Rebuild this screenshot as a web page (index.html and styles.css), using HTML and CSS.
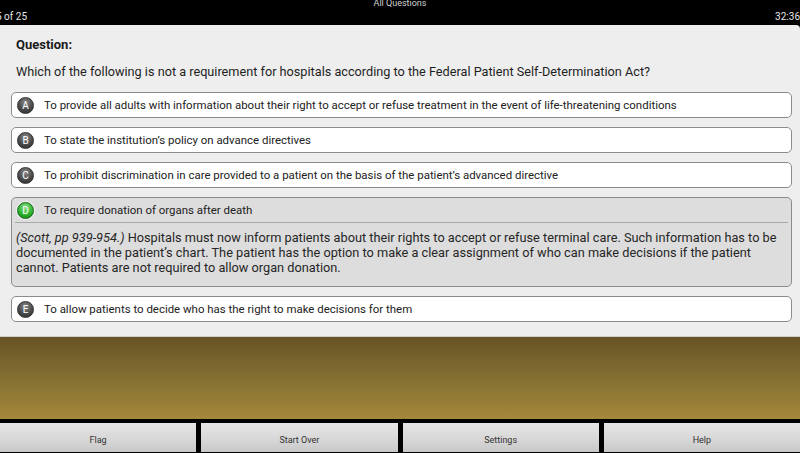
FILE: index.html
```html
<!DOCTYPE html>
<html lang="en">
<head>
    <meta charset="UTF-8">
    <meta name="viewport" content="width=device-width, initial-scale=1.0">
    <title>All Questions</title>
    <link rel="stylesheet" href="styles.css">
</head>
<body>
    <div class="screen">
        <div class="topbar">
            <div class="title">All Questions</div>
            <div class="status-row">
                <span class="counter">5 of 25</span>
                <span class="timer">32:36</span>
            </div>
        </div>

        <div class="panel">
            <div class="q-label">Question:</div>
            <div class="q-text">Which of the following is not a requirement for hospitals according to the Federal Patient Self-Determination Act?</div>

            <div class="answers">
                <div class="answer">
                    <div class="answer-head"><span class="badge">A</span>To provide all adults with information about their right to accept or refuse treatment in the event of life-threatening conditions</div>
                </div>
                <div class="answer">
                    <div class="answer-head"><span class="badge">B</span>To state the institution’s policy on advance directives</div>
                </div>
                <div class="answer">
                    <div class="answer-head"><span class="badge">C</span>To prohibit discrimination in care provided to a patient on the basis of the patient’s advanced directive</div>
                </div>
                <div class="answer answer-correct">
                    <div class="answer-head"><span class="badge badge-correct">D</span>To require donation of organs after death</div>
                    <p class="explain"><em class="source">(Scott, pp 939-954.)</em> Hospitals must now inform patients about their rights to accept or refuse terminal care. Such information has to be documented in the patient’s chart. The patient has the option to make a clear assignment of who can make decisions if the patient cannot. Patients are not required to allow organ donation.</p>
                </div>
                <div class="answer">
                    <div class="answer-head"><span class="badge">E</span>To allow patients to decide who has the right to make decisions for them</div>
                </div>
            </div>
        </div>

        <div class="backdrop"></div>

        <div class="toolbar">
            <button class="tool-btn">Flag</button>
            <button class="tool-btn">Start Over</button>
            <button class="tool-btn">Settings</button>
            <button class="tool-btn">Help</button>
        </div>
    </div>
</body>
</html>
```

FILE: styles.css
```css
* { margin: 0; padding: 0; box-sizing: border-box; }

body {
    font-family: Roboto, 'Liberation Sans', sans-serif;
    background: #000;
    width: 800px;
    height: 453px;
    overflow: hidden;
}

.screen {
    display: flex;
    flex-direction: column;
    height: 453px;
}

.topbar {
    height: 25px;
    background: #000;
    color: #d0d0d0;
    font-size: 9px;
    line-height: 11px;
}

.title {
    text-align: center;
    margin-top: -2px;
}

.status-row {
    display: flex;
    justify-content: space-between;
    margin: 2px 0 0 -4px;
    font-size: 10px;
    line-height: 12px;
    color: #e6e6e6;
}

.panel {
    height: 312px;
    background: #eeeeee;
    padding: 0 8px 0 11px;
    border-top-right-radius: 4px;
    border-bottom: 1px solid #cfcfcf;
}

.q-label {
    font-size: 13px;
    font-weight: bold;
    color: #1a1a1a;
    line-height: 16px;
    padding: 12px 0 0 5px;
}

.q-text {
    font-size: 12.7px;
    color: #1e1e1e;
    line-height: 16px;
    padding: 11px 0 0 5px;
}

.answers {
    display: flex;
    flex-direction: column;
    gap: 9px;
    margin-top: 12px;
}

.answer {
    background: #fff;
    border: 1px solid #8c8c8c;
    border-radius: 5px;
}

.answer-head {
    display: flex;
    align-items: center;
    height: 24px;
    font-size: 11.45px;
    color: #222;
    padding-left: 5px;
}

.badge {
    width: 17px;
    height: 17px;
    border-radius: 50%;
    margin-right: 10px;
    display: flex;
    align-items: center;
    justify-content: center;
    color: #fff;
    font-size: 10px;
    background: radial-gradient(circle at 50% 30%, #8a8a8a 0%, #4a4a4a 55%, #2a2a2a 100%);
    border: 1px solid #333;
    box-shadow: 0 0 0 1px rgba(255, 255, 255, 0.6);
}

.badge-correct {
    background: radial-gradient(circle at 50% 30%, #8fe08f 0%, #2fb52f 55%, #0d7a0d 100%);
    border-color: #1d6b1d;
}

.answer-correct {
    background: #dddddd;
}

.answer-correct .answer-head {
    border-bottom: 1px solid #a9a9a9;
    margin: 0 3px;
    padding-left: 2px;
    height: 25px;
}

.explain {
    font-size: 12.75px;
    line-height: 15px;
    color: #262626;
    padding: 7px 8px 11px 4px;
}

.backdrop {
    height: 82px;
    background: linear-gradient(to bottom, #675325 0%, #7e6a30 40%, #a4883a 100%);
}

.toolbar {
    flex: 1;
    display: grid;
    grid-template-columns: repeat(4, 1fr);
    gap: 5px;
    padding: 4px 0 1px 0;
    background: #000;
}

.tool-btn {
    border: none;
    background: linear-gradient(to bottom, #e6e6e6 0%, #d6d6d6 60%, #c8c8c8 100%);
    font-family: Roboto, 'Liberation Sans', sans-serif;
    font-size: 9px;
    color: #333;
    padding-top: 4px;
}
```
